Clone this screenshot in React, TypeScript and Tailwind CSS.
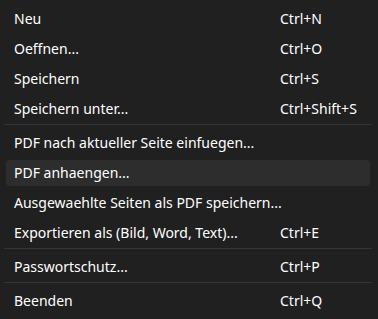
import React from "react";

type Item = { label: string; shortcut?: string; active?: boolean } | "sep";

const items: Item[] = [
  { label: "Neu", shortcut: "Ctrl+N" },
  { label: "Oeffnen...", shortcut: "Ctrl+O" },
  { label: "Speichern", shortcut: "Ctrl+S" },
  { label: "Speichern unter...", shortcut: "Ctrl+Shift+S" },
  "sep",
  { label: "PDF nach aktueller Seite einfuegen..." },
  { label: "PDF anhaengen...", active: true },
  { label: "Ausgewaehlte Seiten als PDF speichern..." },
  { label: "Exportieren als (Bild, Word, Text)...", shortcut: "Ctrl+E" },
  "sep",
  { label: "Passwortschutz...", shortcut: "Ctrl+P" },
  "sep",
  { label: "Beenden", shortcut: "Ctrl+Q" },
];

export default function App() {
  return (
    <div
      className="w-[378px] h-[319px] bg-[#202020] text-white pt-[4px] pl-[6px] pr-[8px] text-[14px] leading-none"
      style={{ fontFamily: '"Noto Sans", "Open Sans", sans-serif' }}
    >
      {items.map((it, i) =>
        it === "sep" ? (
          <div key={i} className="h-[4px] -ml-[2px] -mr-[2px]">
            <div className="h-[1px] bg-[#353535]" />
          </div>
        ) : (
          <div key={i} className="h-[30px] flex items-center">
            <div
              className={
                "w-full h-[26px] flex items-center rounded-[4px] pl-[8px] " +
                (it.active ? "bg-[#2d2d2d]" : "")
              }
            >
              <span className="flex-1 whitespace-nowrap">{it.label}</span>
              {it.shortcut ? (
                <span className="w-[90px] whitespace-nowrap">{it.shortcut}</span>
              ) : null}
            </div>
          </div>
        )
      )}
    </div>
  );
}
